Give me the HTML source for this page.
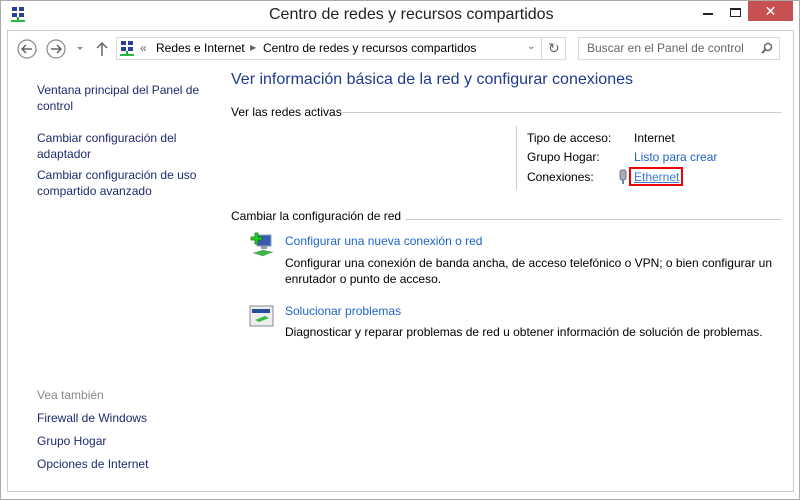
<!DOCTYPE html>
<html><head><meta charset="utf-8"><style>
*{margin:0;padding:0;box-sizing:border-box}
body{width:800px;height:500px;background:#fff;font-family:"Liberation Sans",sans-serif;font-size:12px;color:#000;position:relative;overflow:hidden}
.a{position:absolute;white-space:nowrap}
.win{position:absolute;left:0;top:0;width:800px;height:500px;border:1px solid #aaa}
.inner{position:absolute;left:7px;top:30px;width:787px;height:462px;border:1px solid #ccc}
.nav{color:#1e2a6e}
.link{color:#1e64c8}
.hr{position:absolute;height:1px;background:#ccc}
</style></head><body>
<div class="win"></div>
<div class="inner"></div>
<!-- title bar -->
<svg class="a" style="left:10px;top:6px" width="16" height="16"><rect x="2" y="1" width="5" height="4" fill="#2a3f9a"/><rect x="9" y="1" width="5" height="4" fill="#2a3f9a"/><rect x="2" y="7" width="5" height="4" fill="#2a3f9a"/><rect x="9" y="7" width="5" height="4" fill="#2a3f9a"/><rect x="7" y="11" width="2" height="3" fill="#2a3"/><rect x="1" y="14" width="14" height="2" fill="#2b4"/></svg>
<div class="a" style="left:269px;top:6px;font-size:16px;color:#222">Centro de redes y recursos compartidos</div>
<div class="a" style="left:703px;top:13px;width:10px;height:2px;background:#222"></div>
<div class="a" style="left:730px;top:8px;width:11px;height:9px;border:1px solid #222;border-top-width:2px"></div>
<div class="a" style="left:748px;top:1px;width:45px;height:20px;background:#c75050;color:#fff;text-align:center;font-size:14px;line-height:20px">✕</div>
<!-- nav bar -->
<svg class="a" style="left:17px;top:39px" width="80" height="20"><circle cx="10" cy="10" r="9" fill="none" stroke="#888" stroke-width="1.2"/><path d="M5 10h10M9 6l-4 4 4 4" fill="none" stroke="#666" stroke-width="1.5"/><circle cx="39" cy="10" r="9" fill="none" stroke="#888" stroke-width="1.2"/><path d="M34 10h10M40 6l4 4-4 4" fill="none" stroke="#666" stroke-width="1.5"/><path d="M60 8h6l-3 3z" fill="#888"/></svg>
<svg class="a" style="left:96px;top:41px" width="12" height="16"><path d="M6 2v13M1 7l5-5 5 5" fill="none" stroke="#666" stroke-width="1.5"/></svg>
<div class="a" style="left:116px;top:37px;width:450px;height:23px;border:1px solid #d9d9d9"></div>
<div class="a" style="left:541px;top:37px;width:1px;height:23px;background:#d9d9d9"></div>
<svg class="a" style="left:119px;top:40px" width="16" height="16"><rect x="2" y="1" width="5" height="4" fill="#2a3f9a"/><rect x="9" y="1" width="5" height="4" fill="#2a3f9a"/><rect x="2" y="7" width="5" height="4" fill="#2a3f9a"/><rect x="9" y="7" width="5" height="4" fill="#2a3f9a"/><rect x="7" y="11" width="2" height="3" fill="#2a3"/><rect x="1" y="14" width="14" height="2" fill="#2b4"/></svg>
<div class="a" style="left:140px;top:41px;color:#666">«</div>
<div class="a" style="left:156px;top:41px">Redes e Internet</div>
<div class="a" style="left:250px;top:41px;color:#666;font-size:8px;line-height:14px">▶</div>
<div class="a" style="left:263px;top:41px">Centro de redes y recursos compartidos</div>
<div class="a" style="left:527px;top:41px;color:#666;font-size:10px">⌄</div>
<div class="a" style="left:548px;top:40px;color:#666;font-size:14px">↻</div>
<div class="a" style="left:578px;top:37px;width:202px;height:23px;border:1px solid #d9d9d9"></div>
<div class="a" style="left:587px;top:41px;color:#666">Buscar en el Panel de control</div>
<svg class="a" style="left:760px;top:42px" width="14" height="14"><circle cx="8" cy="5" r="3.5" fill="none" stroke="#666" stroke-width="1.5"/><path d="M5.5 7.5L2 11" stroke="#666" stroke-width="2"/></svg>
<!-- left pane -->
<div class="a nav" style="left:37px;top:82px;line-height:16px">Ventana principal del Panel de<br>control</div>
<div class="a nav" style="left:37px;top:130px;line-height:16px">Cambiar configuración del<br>adaptador</div>
<div class="a nav" style="left:37px;top:167px;line-height:16px">Cambiar configuración de uso<br>compartido avanzado</div>
<div class="a" style="left:37px;top:388px;color:#888">Vea también</div>
<div class="a nav" style="left:37px;top:411px">Firewall de Windows</div>
<div class="a nav" style="left:37px;top:434px">Grupo Hogar</div>
<div class="a nav" style="left:37px;top:457px">Opciones de Internet</div>
<!-- main -->
<div class="a" style="left:231px;top:71px;font-size:16px;color:#1e3a8e">Ver información básica de la red y configurar conexiones</div>
<div class="a" style="left:231px;top:105px">Ver las redes activas</div>
<div class="hr" style="left:341px;top:112px;width:440px"></div>
<div class="a" style="left:516px;top:126px;width:1px;height:64px;background:#ccc"></div>
<div class="a" style="left:527px;top:131px">Tipo de acceso:</div>
<div class="a" style="left:634px;top:131px">Internet</div>
<div class="a" style="left:527px;top:150px">Grupo Hogar:</div>
<div class="a link" style="left:634px;top:150px">Listo para crear</div>
<div class="a" style="left:527px;top:170px">Conexiones:</div>
<svg class="a" style="left:618px;top:169px" width="10" height="16"><rect x="2" y="1" width="6" height="10" rx="2" fill="#aab" stroke="#778"/><rect x="4" y="11" width="2" height="4" fill="#68a"/></svg>
<div class="a" style="left:629px;top:167px;width:54px;height:19px;border:2px solid #e00"></div>
<div class="a" style="left:634px;top:170px;color:#3a7bd5;text-decoration:underline">Ethernet</div>
<div class="hr" style="left:231px;top:219px;width:550px"></div>
<div class="a" style="left:231px;top:209px;background:#fff;padding-right:4px">Cambiar la configuración de red</div>
<svg class="a" style="left:249px;top:232px" width="28" height="26"><rect x="8" y="3" width="14" height="11" fill="#3a5ab0" stroke="#8ab"/><rect x="12" y="14" width="6" height="3" fill="#99a"/><path d="M2 5h4V1h3v4h4v3H9v4H6V8H2z" fill="#2c2" stroke="#171" stroke-width=".7"/><path d="M4 21l10-3 10 2-10 4z" fill="#3b4" stroke="#999" stroke-width=".5"/></svg>
<div class="a link" style="left:285px;top:234px;color:#1e64c8">Configurar una nueva conexión o red</div>
<div class="a" style="left:285px;top:255px;line-height:16px">Configurar una conexión de banda ancha, de acceso telefónico o VPN; o bien configurar un<br>enrutador o punto de acceso.</div>
<svg class="a" style="left:249px;top:304px" width="26" height="24"><rect x="1" y="2" width="23" height="20" fill="#eee" stroke="#888"/><rect x="3" y="5" width="18" height="4" fill="#2a4a9a"/><path d="M6 16l10-4 4 2-10 4z" fill="#3b4"/></svg>
<div class="a link" style="left:285px;top:304px;color:#1e64c8">Solucionar problemas</div>
<div class="a" style="left:285px;top:325px">Diagnosticar y reparar problemas de red u obtener información de solución de problemas.</div>
</body></html>
